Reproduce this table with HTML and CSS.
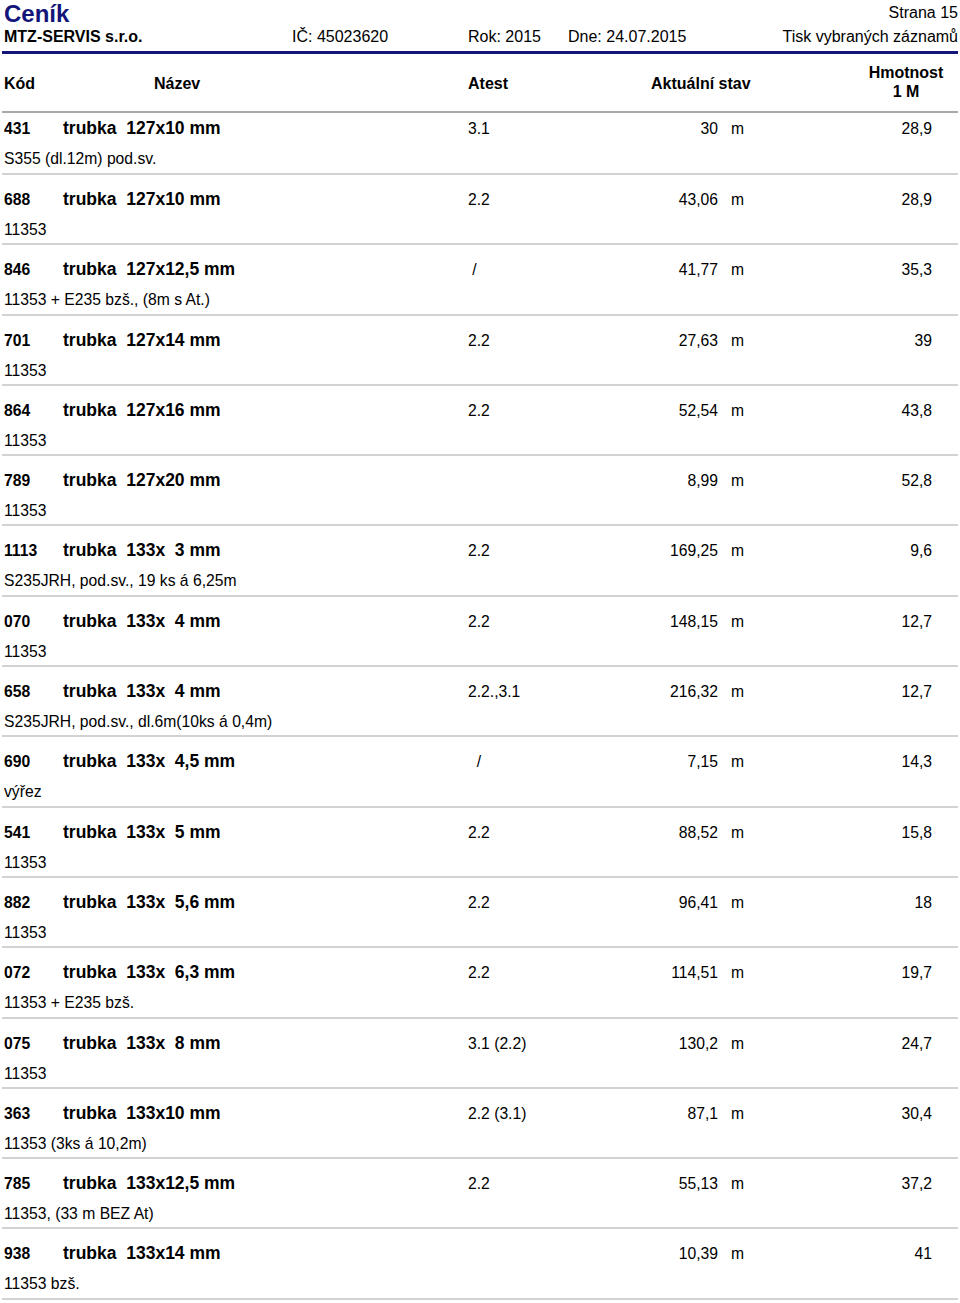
FILE: index.html
```html
<!DOCTYPE html>
<html lang="cs">
<head>
<meta charset="utf-8">
<title>Ceník</title>
<link rel="stylesheet" href="styles.css">
</head>
<body>
<div class="page">
  <header class="head">
    <div class="title-row">
      <div class="title">Ceník</div>
      <div class="pageno">Strana 15</div>
    </div>
    <div class="info-row">
      <div class="company">MTZ-SERVIS s.r.o.</div>
      <div>IČ: 45023620</div>
      <div>Rok: 2015</div>
      <div>Dne: 24.07.2015</div>
      <div class="print">Tisk vybraných záznamů</div>
    </div>
  </header>

  <div class="colhead">
    <div class="lbl">Kód</div>
    <div class="lbl">Název</div>
    <div class="lbl">Atest</div>
    <div class="lbl">Aktuální stav</div>
    <div class="lbl multi">Hmotnost<br>1 M</div>
  </div>

  <div class="rows">
    <div class="row first">
      <div class="line1"><span class="code">431</span><span class="name">trubka  127x10 mm</span><span class="atest">3.1</span><span class="qty">30</span><span class="unit">m</span><span class="wt">28,9</span></div>
      <div class="note">S355 (dl.12m) pod.sv.</div>
    </div>
    <div class="row">
      <div class="line1"><span class="code">688</span><span class="name">trubka  127x10 mm</span><span class="atest">2.2</span><span class="qty">43,06</span><span class="unit">m</span><span class="wt">28,9</span></div>
      <div class="note">11353</div>
    </div>
    <div class="row">
      <div class="line1"><span class="code">846</span><span class="name">trubka  127x12,5 mm</span><span class="atest"> /</span><span class="qty">41,77</span><span class="unit">m</span><span class="wt">35,3</span></div>
      <div class="note">11353 + E235 bzš., (8m s At.)</div>
    </div>
    <div class="row">
      <div class="line1"><span class="code">701</span><span class="name">trubka  127x14 mm</span><span class="atest">2.2</span><span class="qty">27,63</span><span class="unit">m</span><span class="wt">39</span></div>
      <div class="note">11353</div>
    </div>
    <div class="row">
      <div class="line1"><span class="code">864</span><span class="name">trubka  127x16 mm</span><span class="atest">2.2</span><span class="qty">52,54</span><span class="unit">m</span><span class="wt">43,8</span></div>
      <div class="note">11353</div>
    </div>
    <div class="row">
      <div class="line1"><span class="code">789</span><span class="name">trubka  127x20 mm</span><span class="atest"></span><span class="qty">8,99</span><span class="unit">m</span><span class="wt">52,8</span></div>
      <div class="note">11353</div>
    </div>
    <div class="row">
      <div class="line1"><span class="code">1113</span><span class="name">trubka  133x  3 mm</span><span class="atest">2.2</span><span class="qty">169,25</span><span class="unit">m</span><span class="wt">9,6</span></div>
      <div class="note">S235JRH, pod.sv., 19 ks á 6,25m</div>
    </div>
    <div class="row">
      <div class="line1"><span class="code">070</span><span class="name">trubka  133x  4 mm</span><span class="atest">2.2</span><span class="qty">148,15</span><span class="unit">m</span><span class="wt">12,7</span></div>
      <div class="note">11353</div>
    </div>
    <div class="row">
      <div class="line1"><span class="code">658</span><span class="name">trubka  133x  4 mm</span><span class="atest">2.2.,3.1</span><span class="qty">216,32</span><span class="unit">m</span><span class="wt">12,7</span></div>
      <div class="note">S235JRH, pod.sv., dl.6m(10ks á 0,4m)</div>
    </div>
    <div class="row">
      <div class="line1"><span class="code">690</span><span class="name">trubka  133x  4,5 mm</span><span class="atest">  /</span><span class="qty">7,15</span><span class="unit">m</span><span class="wt">14,3</span></div>
      <div class="note">výřez</div>
    </div>
    <div class="row">
      <div class="line1"><span class="code">541</span><span class="name">trubka  133x  5 mm</span><span class="atest">2.2</span><span class="qty">88,52</span><span class="unit">m</span><span class="wt">15,8</span></div>
      <div class="note">11353</div>
    </div>
    <div class="row">
      <div class="line1"><span class="code">882</span><span class="name">trubka  133x  5,6 mm</span><span class="atest">2.2</span><span class="qty">96,41</span><span class="unit">m</span><span class="wt">18</span></div>
      <div class="note">11353</div>
    </div>
    <div class="row">
      <div class="line1"><span class="code">072</span><span class="name">trubka  133x  6,3 mm</span><span class="atest">2.2</span><span class="qty">114,51</span><span class="unit">m</span><span class="wt">19,7</span></div>
      <div class="note">11353 + E235 bzš.</div>
    </div>
    <div class="row">
      <div class="line1"><span class="code">075</span><span class="name">trubka  133x  8 mm</span><span class="atest">3.1 (2.2)</span><span class="qty">130,2</span><span class="unit">m</span><span class="wt">24,7</span></div>
      <div class="note">11353</div>
    </div>
    <div class="row">
      <div class="line1"><span class="code">363</span><span class="name">trubka  133x10 mm</span><span class="atest">2.2 (3.1)</span><span class="qty">87,1</span><span class="unit">m</span><span class="wt">30,4</span></div>
      <div class="note">11353 (3ks á 10,2m)</div>
    </div>
    <div class="row">
      <div class="line1"><span class="code">785</span><span class="name">trubka  133x12,5 mm</span><span class="atest">2.2</span><span class="qty">55,13</span><span class="unit">m</span><span class="wt">37,2</span></div>
      <div class="note">11353, (33 m BEZ At)</div>
    </div>
    <div class="row">
      <div class="line1"><span class="code">938</span><span class="name">trubka  133x14 mm</span><span class="atest"></span><span class="qty">10,39</span><span class="unit">m</span><span class="wt">41</span></div>
      <div class="note">11353 bzš.</div>
    </div>
  </div>
</div>
</body>
</html>
```

FILE: styles.css
```css
* { box-sizing: border-box; }

html, body {
  margin: 0;
  padding: 0;
  background: #fff;
}

body {
  font-family: "Liberation Sans", Arial, Helvetica, sans-serif;
  color: #000;
}

.page {
  margin: 0 2px;
  width: 956px;
}

/* ---------- page header ---------- */
.title-row {
  display: flex;
  justify-content: space-between;
  align-items: flex-start;
  padding: 1px 0 0 2px;
  height: 27px;
}

.title {
  font-size: 24px;
  line-height: 26px;
  font-weight: bold;
  color: #14157a;
}

.pageno {
  font-size: 16px;
  line-height: 18px;
  margin-top: 2.8px;
}

.info-row {
  display: grid;
  grid-template-columns: 288px 176px 100px 1fr auto;
  margin-top: 1px;
  padding: 0 0 5px 2px;
  font-size: 16px;
  line-height: 18px;
  border-bottom: 3px solid #14157a;
}

.company { font-weight: bold; }

.print { text-align: right; }

/* ---------- column header ---------- */
.colhead {
  display: grid;
  grid-template-columns: 150px 314px 183px 205px 100px;
  align-items: start;
  height: 59px;
  padding-left: 2px;
  border-bottom: 2px solid #a9a9a9;
  font-size: 16px;
  font-weight: bold;
  line-height: 18px;
}

.colhead .lbl { padding-top: 21px; }

.colhead .lbl.multi {
  padding-top: 8.5px;
  line-height: 19px;
  text-align: center;
}

/* ---------- rows ---------- */
.row {
  height: 70.3px;
  padding: 14px 0 0 2px;
  border-bottom: 2px solid #d2d2d2;
}

.row.first {
  height: 62px;
  padding-top: 5px;
}

.line1 {
  display: grid;
  grid-template-columns: 59px 405px 140px 110px 73px 141px;
  align-items: baseline;
  line-height: 20px;
  font-size: 15.7px;
}

.code { font-weight: bold; }

.name {
  font-weight: bold;
  font-size: 17.5px;
  white-space: pre;
}

.atest { white-space: pre; }

.qty, .wt { text-align: right; }

.unit { padding-left: 13px; }

.note {
  margin-top: 10px;
  font-size: 15.7px;
  line-height: 20px;
}
```
